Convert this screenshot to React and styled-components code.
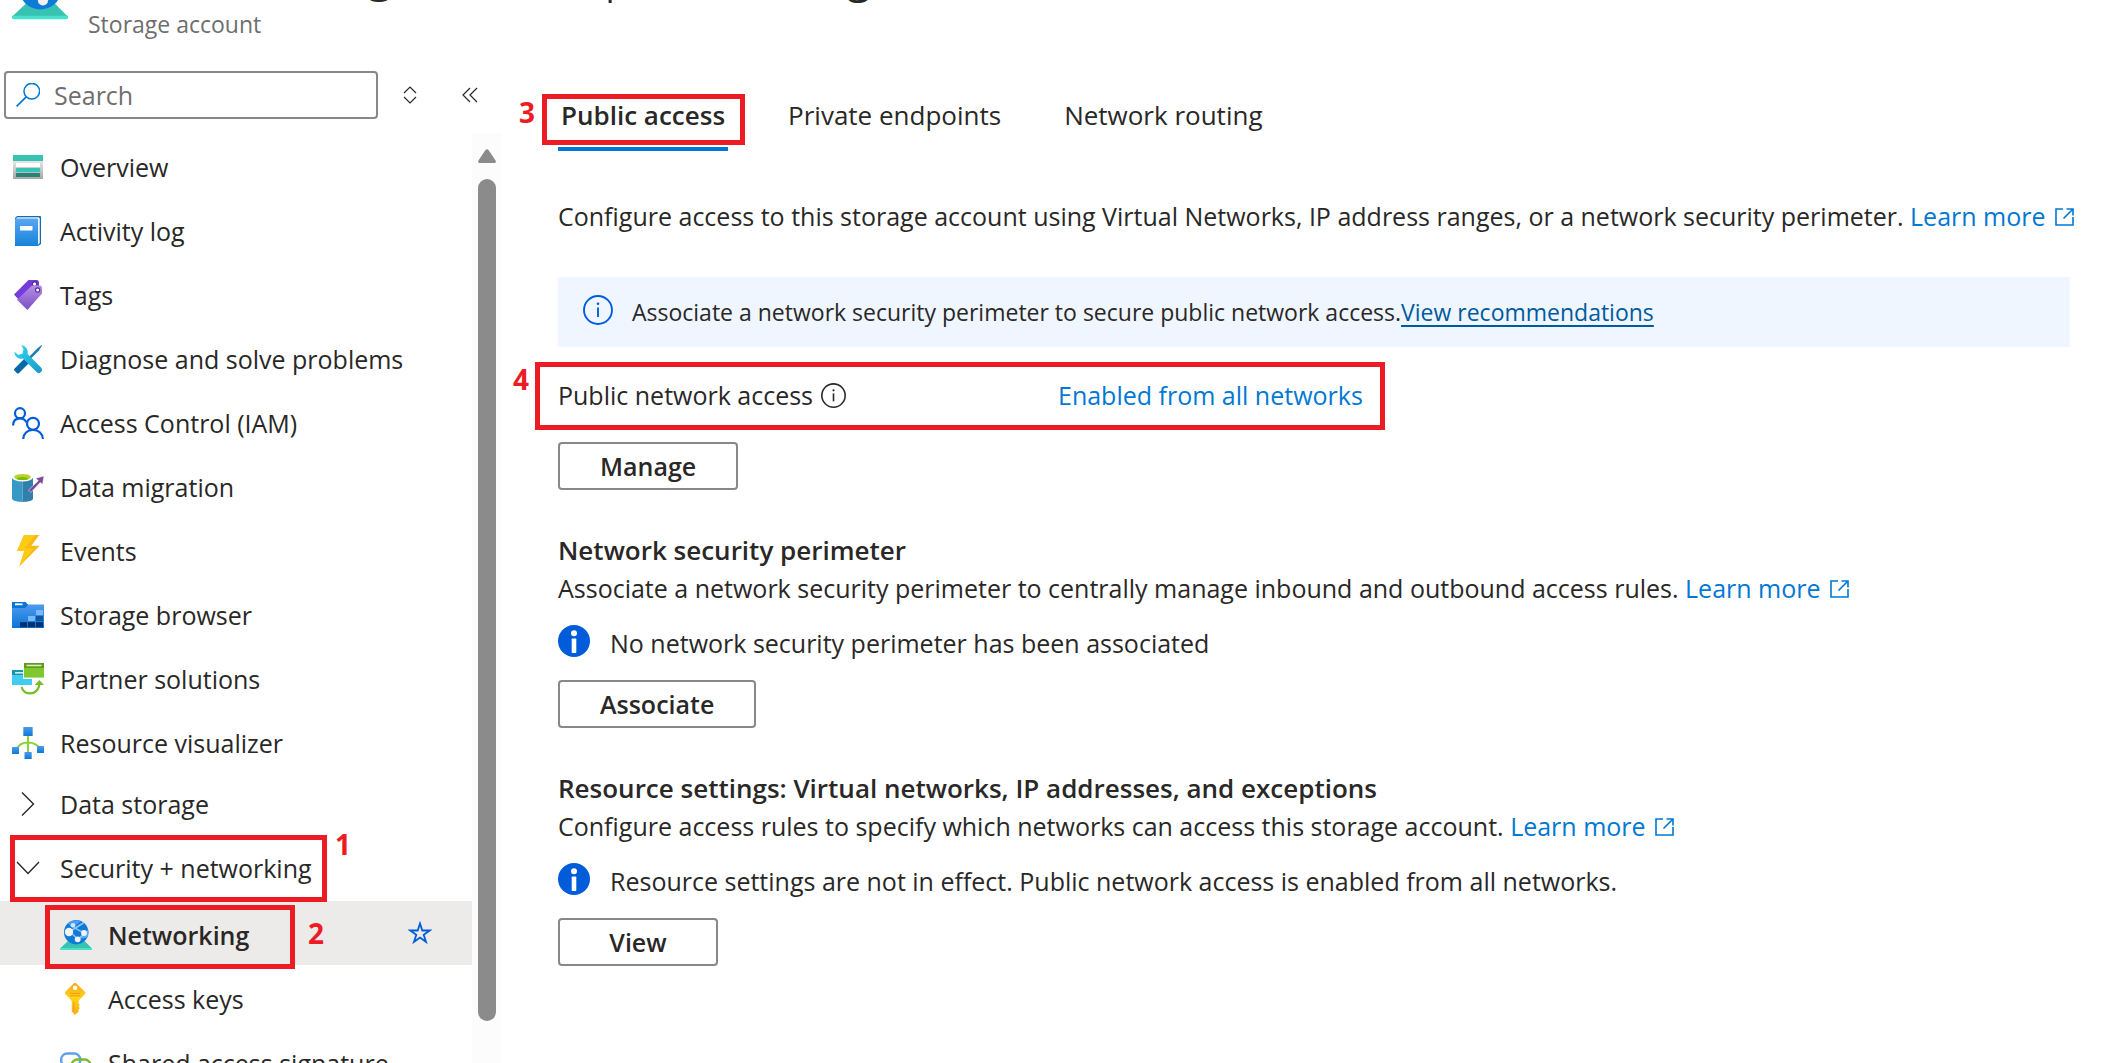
import React, { useState } from "react";
import styled, { createGlobalStyle } from "styled-components";

const GlobalStyle = createGlobalStyle`
  * {
    box-sizing: border-box;
  }

  body {
    margin: 0;
    background-color: #ffffff;
    color: #292827;
    font-family: "Open Sans", "Noto Sans", sans-serif;
    font-size: 25px;
    line-height: 36px;
  }

  button,
  input {
    font: inherit;
    color: inherit;
  }
`;

const Page = styled.div`
  display: flex;
  flex-direction: column;
  height: 100vh;
  overflow: hidden;
`;

// header
const Header = styled.header`
  display: flex;
  align-items: flex-end;
  gap: 20px;
  height: 40px;
  padding-left: 12px;
  overflow: hidden;
  flex-shrink: 0;
`;

const HeaderIcon = styled.div`
  flex-shrink: 0;
  height: 56px;
  margin-bottom: 19px;
`;

const HeaderText = styled.div`
  display: flex;
  flex-direction: column;
  gap: 3px;
  white-space: nowrap;
`;

const Title = styled.h1`
  margin: 0;
  font-size: 44px;
  font-weight: 600;
  line-height: 60px;

  & > span {
    font-weight: 400;
  }
`;

const SubTitle = styled.div`
  color: #6e6e6e;
  font-size: 23px;
  line-height: 32px;
`;

const Body = styled.div`
  display: flex;
  flex: 1;
  min-height: 0;
  padding-top: 31px;
`;

// left menu
const Sidebar = styled.aside`
  display: flex;
  flex-direction: column;
  width: 502px;
  flex-shrink: 0;
`;

const SearchRow = styled.div`
  display: flex;
  align-items: center;
  height: 48px;
  margin-bottom: 14px;
  padding-left: 4px;
`;

const SearchBox = styled.label`
  display: flex;
  align-items: center;
  gap: 14px;
  width: 374px;
  height: 48px;
  padding: 0 10px;
  border: 2px solid #8a8886;
  border-radius: 4px;

  & > input {
    flex: 1;
    min-width: 0;
    padding: 0;
    border: none;
    outline: none;
    background: none;
  }

  & > input::placeholder {
    color: #6e6e6e;
    opacity: 1;
  }
`;

const IconButton = styled.button`
  display: flex;
  justify-content: center;
  align-items: center;
  width: ${(props) => props.$width || 32}px;
  height: 32px;
  padding: 0;
  border: none;
  background: none;
`;

const MenuArea = styled.div`
  display: flex;
  flex: 1;
  min-height: 0;
`;

const Menu = styled.nav`
  flex: 1;
  min-width: 0;
`;

const MenuRow = styled.div`
  position: relative;
  display: flex;
  align-items: center;
  height: 64px;
  padding-right: 40px;
  background-color: ${(props) => (props.$active ? "#edebe9" : "transparent")};
`;

const MenuLink = styled.a`
  display: flex;
  align-items: center;
  flex: 1;
  gap: 16px;
  padding-top: 3px;
  padding-left: ${(props) => (props.$sub ? 60 : 12)}px;
  color: inherit;
  font-weight: ${(props) => (props.$active ? 600 : 400)};
  text-decoration: none;
`;

const GroupButton = styled.button`
  display: flex;
  align-items: center;
  flex: 1;
  gap: 16px;
  padding: 0 0 3px 12px;
  border: none;
  background: none;
  text-align: left;
`;

const ScrollBar = styled.div`
  display: flex;
  flex-direction: column;
  align-items: center;
  gap: 16px;
  width: 30px;
  padding: 16px 0 42px;
  background-color: #fcfcfc;
`;

const ScrollThumb = styled.div`
  flex: 1;
  width: 18px;
  border-radius: 9px;
  background-color: #8b8b8b;
`;

// red marks over the page
const Mark = styled.div`
  position: absolute;
  z-index: 2;
  top: ${(props) => props.$top}px;
  left: ${(props) => props.$left}px;
  width: ${(props) => props.$width}px;
  height: ${(props) => props.$height}px;
  border: 5px solid #ed1c24;
  pointer-events: none;
`;

const MarkNumber = styled.span`
  position: absolute;
  top: ${(props) => props.$top}px;
  ${(props) => (props.$side === "left" ? "right: 100%;" : "left: 100%;")}
  margin: 0 ${(props) => props.$gap}px;
  color: #ed1c24;
  font-size: 28px;
  font-weight: 700;
  line-height: 36px;
`;

// right side
const Main = styled.main`
  flex: 1;
  min-width: 0;
  padding: 26px 40px 0 56px;
`;

const Tabs = styled.div`
  display: flex;
  gap: 57px;
`;

const Tab = styled.button`
  position: relative;
  padding: 0 3px 14px;
  border: none;
  border-bottom: 4px solid ${(props) => (props.$active ? "#0078d4" : "transparent")};
  background: none;
  font-size: 26px;
  font-weight: ${(props) => (props.$active ? 600 : 400)};
  line-height: 36px;
`;

const Text = styled.p`
  margin: 0;
`;

const Intro = styled(Text)`
  margin-top: 47px;
`;

const Link = styled.a`
  color: #0078d4;
  text-decoration: none;

  & > svg {
    margin-left: 3px;
  }
`;

const Banner = styled.div`
  display: flex;
  align-items: center;
  gap: 19px;
  height: 70px;
  margin-top: 43px;
  margin-right: 15px;
  padding-left: 25px;
  background-color: #eff6ff;
  font-size: 23px;

  & > svg {
    margin-bottom: 4px;
  }

  & a {
    color: #005a9e;
    text-underline-offset: 4px;
  }
`;

const AccessRow = styled.div`
  position: relative;
  display: grid;
  grid-template-columns: 500px 1fr;
  margin-top: 30px;
`;

const AccessLabel = styled.div`
  display: flex;
  align-items: center;
  gap: 8px;
`;

const Button = styled.button`
  display: block;
  height: 48px;
  margin-top: ${(props) => props.$top || 19}px;
  padding: 0 40px;
  min-width: 160px;
  border: 2px solid #8a8886;
  border-radius: 4px;
  background-color: #ffffff;
  font-weight: 600;
`;

const Section = styled.section`
  margin-top: 42px;
`;

const SectionTitle = styled.h2`
  margin: 0 0 2px;
  font-size: 26px;
  font-weight: 600;
  line-height: 36px;
`;

const Status = styled.div`
  display: flex;
  align-items: flex-start;
  gap: 20px;
  margin-top: 19px;
`;

const Svg = ({ size = 32, children }) => (
  <svg width={size} height={size} viewBox="0 0 32 32" fill="none" aria-hidden="true" style={{ flexShrink: 0 }}>
    {children}
  </svg>
);

const OverviewIcon = () => (
  <Svg>
    <defs>
      <linearGradient id="ovBody" x1="0" y1="10" x2="0" y2="28" gradientUnits="userSpaceOnUse">
        <stop stopColor="#e6e6e6" />
        <stop offset="1" stopColor="#a6a6a6" />
      </linearGradient>
    </defs>
    <rect x="1" y="10" width="30" height="18" fill="url(#ovBody)" />
    <rect x="1" y="4" width="30" height="6" fill="#37c2b1" />
    <rect x="4" y="12" width="24" height="4" rx="0.6" fill="#ffffff" />
    <rect x="4" y="17" width="24" height="4" rx="0.6" fill="#37c2b1" />
    <rect x="4" y="22" width="24" height="4" rx="0.6" fill="#258277" />
  </Svg>
);

const ActivityIcon = () => (
  <Svg>
    <defs>
      <linearGradient id="actBody" x1="0" y1="2" x2="0" y2="31" gradientUnits="userSpaceOnUse">
        <stop stopColor="#5ea8f2" />
        <stop offset="1" stopColor="#1484da" />
      </linearGradient>
    </defs>
    <path d="M5 1h23a1 1 0 0 1 1 1v27l-3 2H3V3z" fill="#0f6cb4" />
    <path d="M5 2.2h21.6l1.2 1V28l-2 2V4H4z" fill="#e8f3fc" />
    <path d="M4 3.6h21a1 1 0 0 1 1 1V31H4.4A1.4 1.4 0 0 1 3 29.6V4.6a1 1 0 0 1 1-1z" fill="url(#actBody)" />
    <rect x="8" y="11" width="12.5" height="4.5" rx="0.4" fill="#ffffff" />
  </Svg>
);

const TagsIcon = () => (
  <Svg>
    <defs>
      <linearGradient id="tagFront" x1="0" y1="6" x2="0" y2="31" gradientUnits="userSpaceOnUse">
        <stop stopColor="#b88ee6" />
        <stop offset="1" stopColor="#7a4fc4" />
      </linearGradient>
    </defs>
    <path d="M16.5 1H25.5l1.5 1.5V10L7 21 2 15.5z" fill="#773adc" />
    <circle cx="22.6" cy="5" r="2.1" fill="#ffffff" stroke="#552f99" strokeWidth="1.6" />
    <path d="M20 6.5h8.5L30 8v6.6L15.4 31 5 20.8z" fill="url(#tagFront)" />
    <circle cx="25.6" cy="11" r="2.1" fill="#ffffff" stroke="#552f99" strokeWidth="1.2" />
    <circle cx="22.6" cy="5" r="1.5" fill="#ffffff" />
  </Svg>
);

const DiagnoseIcon = () => (
  <Svg>
    <defs>
      <linearGradient id="dgWrench" x1="4" y1="3" x2="28" y2="29" gradientUnits="userSpaceOnUse">
        <stop stopColor="#32d4f5" />
        <stop offset="1" stopColor="#1a9cc8" />
      </linearGradient>
    </defs>
    <path d="M29.5 2 30 2.6 27 7.5 18.5 16l-1.8-1.8 8.6-8.6z" fill="#1e7fae" />
    <path d="M12.5 15.5 17 20 6.8 30.2Q5.8 31 5 30.2L2.4 27.6Q1.6 26.7 2.4 25.8z" fill="#0669a8" />
    <path
      d="M9.2 2.3A7 7 0 0 1 15.6 11L29 24.6a3.1 3.1 0 0 1-4.5 4.5L11 15.6A7 7 0 0 1 2.3 8.6l4 3.3 4.2-1.3 1-4.3z"
      fill="url(#dgWrench)"
    />
  </Svg>
);

const AccessIcon = () => (
  <Svg>
    <g stroke="#015cda" strokeWidth="2.2">
      <circle cx="8" cy="6.2" r="5" />
      <path d="M1.1 18.5C1.1 13.5 4 11.3 8 11.3c3 0 5.3 1.5 6.3 4" />
      <circle cx="21" cy="16.8" r="6" />
      <path d="M11.2 32.5c0-6 4.2-9.6 9.8-9.6s9.9 3.6 9.9 9.6" />
    </g>
  </Svg>
);

const MigrationIcon = () => (
  <Svg>
    <path d="M0 6h10.5v25C4.5 31 0 29.5 0 27.6z" fill="#3999c6" />
    <path d="M10.5 6H21v21.6c0 2-4.5 3.4-10.5 3.4z" fill="#2f80ab" />
    <ellipse cx="10.5" cy="6.3" rx="10.5" ry="4.3" fill="#ffffff" />
    <ellipse cx="10.5" cy="6" rx="8.4" ry="3.1" fill="#b8d432" />
    <ellipse cx="10.5" cy="7.4" rx="5.6" ry="1.5" fill="#7fba00" />
    <path d="m16.5 19 9.8-9.2-2.5-2.5L32 5l-1.5 8.6-2.3-2.2-9.3 10z" fill="#804998" stroke="#ffffff" strokeWidth="0.5" />
  </Svg>
);

const EventsIcon = () => (
  <Svg>
    <path d="M12 0h15.3l-8 10.7h8.4L7.3 31.5 12.3 16H5z" fill="#fcb81a" />
    <path d="M12 0h11L12.5 13.5h9L7.3 31.5 12.3 16H5z" fill="#fdcb13" />
  </Svg>
);

const StorageIcon = () => (
  <Svg>
    <defs>
      <linearGradient id="stFolder" x1="0" y1="5" x2="0" y2="29" gradientUnits="userSpaceOnUse">
        <stop stopColor="#4f9bee" />
        <stop offset="1" stopColor="#0a74d6" />
      </linearGradient>
    </defs>
    <path d="M0 3h13.5L16.5 6H32v23H0z" fill="#0a74d6" />
    <path d="M0 9h13l3.5-3.5H32V29H0z" fill="url(#stFolder)" />
    <rect x="3" y="4.4" width="7.5" height="1.8" fill="#ffffff" />
    <rect x="24" y="11" width="7" height="5" fill="#7fb6fa" />
    <rect x="16" y="17" width="7" height="5" fill="#7fb6fa" />
    <rect x="24" y="17" width="7" height="5" fill="#0b57a0" />
    <rect x="8" y="23.2" width="7" height="5" fill="#04316b" />
    <rect x="16" y="23.2" width="7" height="5" fill="#04316b" />
    <rect x="24" y="23.2" width="7" height="5" fill="#04316b" />
  </Svg>
);

const PartnerIcon = () => (
  <Svg>
    <rect y="7" width="20" height="15" fill="#40cdf0" />
    <rect y="7" width="20" height="5" fill="#1b93b5" />
    <rect x="3" y="9" width="9" height="1.6" fill="#c9eef8" />
    <rect x="11" width="21" height="16" fill="#ffffff" />
    <rect x="12" width="20" height="14.6" fill="#7fc92f" />
    <rect x="12" width="20" height="5" fill="#5e9a1e" />
    <rect x="14.5" y="1.7" width="15" height="1.6" fill="#d6efbc" />
    <path d="M9.5 24c1.2 4 4.5 6.4 8.5 6.4 5.2 0 9-3.8 9.4-9" stroke="#76bc2d" strokeWidth="2.2" />
    <path d="m27.3 17 4.7 5h-9.4z" fill="#76bc2d" />
  </Svg>
);

const VisualizerIcon = () => (
  <Svg>
    <defs>
      <linearGradient id="vzBox" x1="0" y1="0" x2="0" y2="1">
        <stop stopColor="#4a9bee" />
        <stop offset="1" stopColor="#1178d6" />
      </linearGradient>
    </defs>
    <path d="M16 8v18M5 22c2-5 6-6.6 11-6.6S25 17 28 21.5" stroke="#86d633" strokeWidth="2" />
    <rect x="11.3" y="0" width="9.4" height="9" rx="0.5" fill="url(#vzBox)" />
    <rect x="0" y="20" width="7" height="7" rx="0.5" fill="url(#vzBox)" />
    <rect x="12.5" y="25" width="7.2" height="7" rx="0.5" fill="url(#vzBox)" />
    <rect x="25" y="19" width="7" height="7" rx="0.5" fill="url(#vzBox)" />
  </Svg>
);

const NetworkingIcon = ({ size }) => (
  <Svg size={size}>
    <path d="M8 22h16.5L32 29.5H0z" fill="#37c2b1" />
    <path d="M0 29h32v1.2a.8.8 0 0 1-.8.8H.8A.8.8 0 0 1 0 30.2z" fill="#46e3cb" />
    <circle cx="16.2" cy="13.2" r="12.2" fill="#0f7bd8" />
    <path d="M8 4.2C11 1.5 17 .2 21 2L12.5 9z" fill="#4aa0f2" />
    <path d="M28 10.5 18 20l9.5-1.5c1-2.5 1.2-5 .5-8z" fill="#5ea8f5" />
    <path d="m10 12.5 14-9M13 7c3 3 7 5.5 11 6M10 13l8 7 8-6.5" stroke="#8fc4f8" strokeWidth="1.5" />
    <circle cx="13" cy="6.2" r="2.3" fill="#cfe6fb" />
    <circle cx="9" cy="13" r="4.2" fill="#f2f2f2" />
    <circle cx="24" cy="14" r="2.9" fill="#f2f2f2" />
    <circle cx="17.7" cy="20.3" r="2.9" fill="#f2f2f2" />
  </Svg>
);

const KeyIcon = () => (
  <Svg>
    <defs>
      <linearGradient id="keyBody" x1="0" y1="0" x2="0" y2="32" gradientUnits="userSpaceOnUse">
        <stop stopColor="#fea11b" />
        <stop offset="0.45" stopColor="#ffd519" />
        <stop offset="1" stopColor="#f8ae17" />
      </linearGradient>
    </defs>
    <path
      d="M13.4.8 5.6 8.4a2.2 2.2 0 0 0 0 3l5.4 5.7c.6.6.8 1.2.8 2v9.4L15 31.9l3.6-3.2V26.5L19.9 25l-1.3-1.5 1.3-1.5-1.3-1.5v-2c0-.6.2-1 .6-1.4l5.4-5.6a2.2 2.2 0 0 0 0-3.1L16.7.8a2.3 2.3 0 0 0-3.3 0z"
      fill="url(#keyBody)"
    />
    <circle cx="15.1" cy="4.7" r="2.2" fill="#ffffff" />
    <path d="M10 10.4h10.5M10 12.8h10.5" stroke="#f29a12" strokeWidth="1" />
    <path d="M13.8 19v9.5" stroke="#f29a12" strokeWidth="1" />
  </Svg>
);

const SignatureIcon = () => (
  <Svg>
    <rect x="1.2" y="6.5" width="19" height="13" rx="6" stroke="#5ea0ef" strokeWidth="2.4" />
    <rect x="11.5" y="12.5" width="19" height="13" rx="6" stroke="#76bc2d" strokeWidth="2.4" />
  </Svg>
);

const ChevronIcon = ({ open }) => (
  <Svg>
    <path d={open ? "M5 10l11 11.5L27 10" : "M10 4.5 21.5 16 10 27.5"} stroke="#292827" strokeWidth="1.4" />
  </Svg>
);

const SearchIcon = () => (
  <svg width="24" height="24" viewBox="0 0 24 24" fill="none" aria-hidden="true">
    <circle cx="15.8" cy="8.2" r="7.8" stroke="#0078d4" strokeWidth="1.5" />
    <path d="M10.2 13.8.6 23.4" stroke="#0078d4" strokeWidth="1.7" />
  </svg>
);

const SortIcon = () => (
  <svg width="14" height="18" viewBox="0 0 14 18" fill="none" aria-hidden="true">
    <path d="m1 7 6-6 6 6M1 11l6 6 6-6" stroke="#292827" strokeWidth="1.2" />
  </svg>
);

const CollapseIcon = () => (
  <svg width="16" height="16" viewBox="0 0 16 16" fill="none" aria-hidden="true">
    <path d="M8 1 1 8l7 7M15 1 8 8l7 7" stroke="#292827" strokeWidth="1.2" />
  </svg>
);

const StarIcon = () => (
  <svg width="24" height="24" viewBox="0 0 24 24" fill="none" aria-hidden="true">
    <path
      d="m12 2.5 2.3 7h7.4l-6 4.3 2.3 7-6-4.3-6 4.3 2.3-7-6-4.3h7.4z"
      stroke="#015cda"
      strokeWidth="1.8"
    />
  </svg>
);

const ArrowUp = () => (
  <svg width="18" height="14" viewBox="0 0 18 14" aria-hidden="true">
    <path d="M7.3 1.2a2 2 0 0 1 3.4 0l7 10.5A1.5 1.5 0 0 1 16.5 14h-15A1.5 1.5 0 0 1 .3 11.7z" fill="#8b8b8b" />
  </svg>
);

const ExternalIcon = () => (
  <svg width="20" height="18" viewBox="0 0 20 18" fill="none" aria-hidden="true">
    <path d="M8 1H1v16h17V9M11.5 1H18v6.5M18 1 8.5 10.5" stroke="#0078d4" strokeWidth="1.6" />
  </svg>
);

const InfoOutline = ({ size, color }) => (
  <svg width={size} height={size} viewBox="0 0 30 30" fill="none" aria-hidden="true">
    <circle cx="15" cy="15" r="14" stroke={color} strokeWidth="1.9" />
    <path d="M15 12.5V22" stroke={color} strokeWidth="1.9" />
    <circle cx="15" cy="8.8" r="1.3" fill={color} />
  </svg>
);

const InfoFilled = () => (
  <Svg>
    <circle cx="16" cy="16" r="16" fill="#015cda" />
    <rect x="13.7" y="13.5" width="4.6" height="14.5" rx="0.8" fill="#ffffff" />
    <circle cx="16" cy="8.2" r="3" fill="#ffffff" />
  </Svg>
);

const menuItems = [
  { name: "Overview", Icon: OverviewIcon },
  { name: "Activity log", Icon: ActivityIcon },
  { name: "Tags", Icon: TagsIcon },
  { name: "Diagnose and solve problems", Icon: DiagnoseIcon },
  { name: "Access Control (IAM)", Icon: AccessIcon },
  { name: "Data migration", Icon: MigrationIcon },
  { name: "Events", Icon: EventsIcon },
  { name: "Storage browser", Icon: StorageIcon },
  { name: "Partner solutions", Icon: PartnerIcon },
  { name: "Resource visualizer", Icon: VisualizerIcon },
];

const tabs = ["Public access", "Private endpoints", "Network routing"];

const LearnMore = () => (
  <Link href="#learn">
    Learn more <ExternalIcon />
  </Link>
);

const App = () => {
  const [search, setSearch] = useState("");
  const [tab, setTab] = useState(0);

  return (
    <Page>
      <GlobalStyle />
      <Header>
        <HeaderIcon>
          <NetworkingIcon size={56} />
        </HeaderIcon>
        <HeaderText>
          <Title>
            contosostorageaccount <span>| Networking</span>
          </Title>
          <SubTitle>Storage account</SubTitle>
        </HeaderText>
      </Header>

      <Body>
        <Sidebar>
          <SearchRow>
            <SearchBox>
              <SearchIcon />
              <input
                type="text"
                placeholder="Search"
                aria-label="Search"
                value={search}
                onChange={(e) => setSearch(e.target.value)}
              />
            </SearchBox>
            <IconButton $width={64} aria-label="Expand all">
              <SortIcon />
            </IconButton>
            <IconButton $width={56} aria-label="Collapse menu">
              <CollapseIcon />
            </IconButton>
          </SearchRow>

          <MenuArea>
            <Menu>
              {menuItems.map(({ name, Icon }) => (
                <MenuRow key={name}>
                  <MenuLink href="#menu">
                    <Icon />
                    {name}
                  </MenuLink>
                </MenuRow>
              ))}
              <MenuRow>
                <GroupButton aria-expanded="false">
                  <ChevronIcon />
                  Data storage
                </GroupButton>
              </MenuRow>
              <MenuRow>
                <GroupButton aria-expanded="true">
                  <ChevronIcon open />
                  Security + networking
                </GroupButton>
                <Mark $top={-2} $left={10} $width={317} $height={67}>
                  <MarkNumber $top={-14} $gap={13}>1</MarkNumber>
                </Mark>
              </MenuRow>
              <MenuRow $active>
                <MenuLink href="#menu" $sub $active>
                  <NetworkingIcon />
                  Networking
                </MenuLink>
                <IconButton $width={24} aria-label="Add to favorites">
                  <StarIcon />
                </IconButton>
                <Mark $top={4} $left={45} $width={250} $height={64}>
                  <MarkNumber $top={5} $gap={18}>2</MarkNumber>
                </Mark>
              </MenuRow>
              <MenuRow>
                <MenuLink href="#menu" $sub>
                  <KeyIcon />
                  Access keys
                </MenuLink>
              </MenuRow>
              <MenuRow>
                <MenuLink href="#menu" $sub>
                  <SignatureIcon />
                  Shared access signature
                </MenuLink>
              </MenuRow>
            </Menu>
            <ScrollBar>
              <ArrowUp />
              <ScrollThumb />
            </ScrollBar>
          </MenuArea>
        </Sidebar>

        <Main>
          <Tabs>
            {tabs.map((name, i) => (
              <Tab key={name} $active={tab === i} onClick={() => setTab(i)}>
                {name}
                {i === 0 && (
                  <Mark $top={-3} $left={-16} $width={203} $height={51}>
                    <MarkNumber $side="left" $top={-5} $gap={12}>3</MarkNumber>
                  </Mark>
                )}
              </Tab>
            ))}
          </Tabs>

          <Intro>
            Configure access to this storage account using Virtual Networks, IP address ranges, or a network
            security perimeter. <LearnMore />
          </Intro>

          <Banner>
            <InfoOutline size={30} color="#015cda" />
            <Text>
              Associate a network security perimeter to secure public network access.
              <a href="#recommendations">View recommendations</a>
            </Text>
          </Banner>

          <AccessRow>
            <AccessLabel>
              Public network access <InfoOutline size={25} color="#292827" />
            </AccessLabel>
            <Link href="#networks">Enabled from all networks</Link>
            <Mark $top={-15} $left={-23} $width={850} $height={68}>
              <MarkNumber $side="left" $top={-6} $gap={11}>4</MarkNumber>
            </Mark>
          </AccessRow>
          <Button $top={29}>Manage</Button>

          <Section>
            <SectionTitle>Network security perimeter</SectionTitle>
            <Text>
              Associate a network security perimeter to centrally manage inbound and outbound access rules.{" "}
              <LearnMore />
            </Text>
            <Status>
              <InfoFilled />
              No network security perimeter has been associated
            </Status>
            <Button>Associate</Button>
          </Section>

          <Section>
            <SectionTitle>Resource settings: Virtual networks, IP addresses, and exceptions</SectionTitle>
            <Text>
              Configure access rules to specify which networks can access this storage account. <LearnMore />
            </Text>
            <Status>
              <InfoFilled />
              Resource settings are not in effect. Public network access is enabled from all networks.
            </Status>
            <Button>View</Button>
          </Section>
        </Main>
      </Body>
    </Page>
  );
};

export default App;
